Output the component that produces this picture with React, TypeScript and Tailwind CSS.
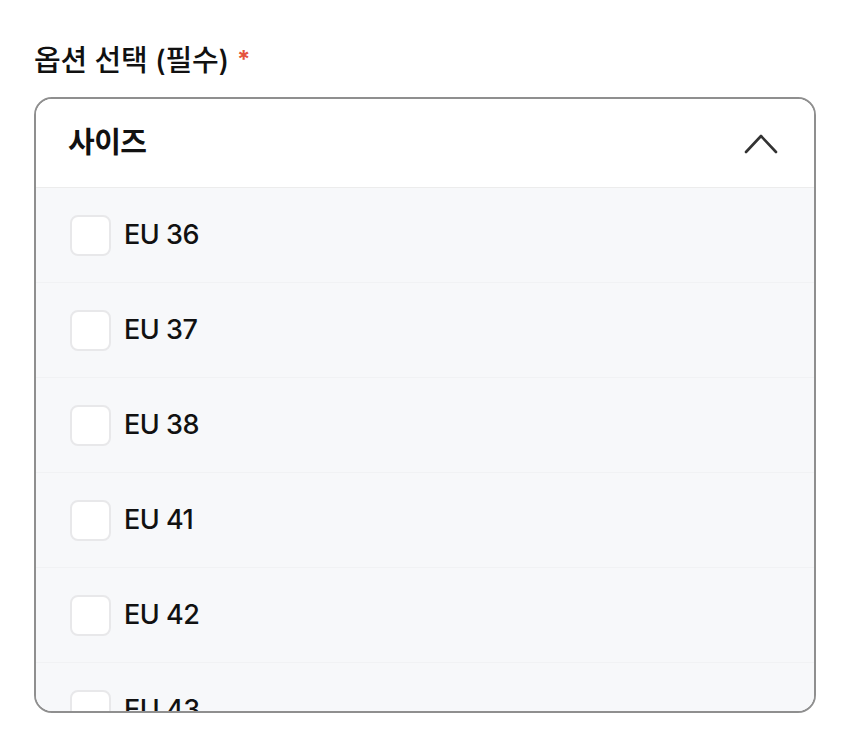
import { useState } from 'react';

const SIZES = ['EU 36', 'EU 37', 'EU 38', 'EU 41', 'EU 42', 'EU 43', 'EU 44'];

const FONT = '[font-family:Inter,"Noto_Sans_CJK_KR",sans-serif]';

export default function App() {
  const [open, setOpen] = useState(true);
  const [checked, setChecked] = useState<string[]>([]);

  const toggle = (s: string) =>
    setChecked(prev => (prev.includes(s) ? prev.filter(x => x !== s) : [...prev, s]));

  return (
    <div className={`min-h-screen bg-white px-[34px] pt-[41px] text-[#111] ${FONT}`}>
      {/* Label */}
      <div className="flex items-center h-[38px] text-[29px] font-medium leading-none tracking-[-0.2px]">
        <span>옵션 선택 (필수)</span>
        <span className="ml-[8px] text-[#e5533d] text-[24px] font-bold">*</span>
      </div>

      {/* Dropdown */}
      <div className="mt-[18px] h-[616px] rounded-[18px] border-2 border-[#8f8f8f] overflow-hidden flex flex-col">
        <button
          onClick={() => setOpen(!open)}
          className="h-[89px] shrink-0 flex items-center justify-between pl-[32px] pr-[36px] bg-white border-b border-[#ececec]"
        >
          <span className="text-[29px] font-bold tracking-[-0.5px]">사이즈</span>
          <svg width="34" height="22" viewBox="0 0 34 22" fill="none">
            <path
              d="M2 20 L17 4 L32 20"
              stroke="#333"
              strokeWidth="2.6"
              strokeLinecap="round"
              strokeLinejoin="round"
            />
          </svg>
        </button>

        {open && (
          <div className="flex-1 overflow-hidden bg-[#f7f8fa]">
            {SIZES.map(s => (
              <label
                key={s}
                className="h-[95px] flex items-center pl-[34px] gap-[13px] border-b border-[#f1f2f4] cursor-pointer"
              >
                <input
                  type="checkbox"
                  className="hidden"
                  checked={checked.includes(s)}
                  onChange={() => toggle(s)}
                />
                <span className="w-[41px] h-[41px] rounded-[8px] border-2 border-[#e8e8ea] bg-white" />
                <span className="text-[27px] font-medium tracking-[-0.5px]">{s}</span>
              </label>
            ))}
          </div>
        )}
      </div>
    </div>
  );
}
